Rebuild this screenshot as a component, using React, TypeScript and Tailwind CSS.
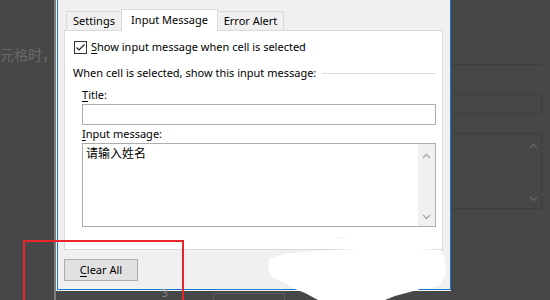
import React from 'react';

const font = { fontFamily: '"Noto Sans", "Noto Sans CJK SC", sans-serif' };

function Chevron({ up }: { up?: boolean }) {
  return (
    <svg width="9" height="6" viewBox="0 0 9 6" className="block">
      <path
        d={up ? 'M1 5 L4.5 1.5 L8 5' : 'M1 1 L4.5 4.5 L8 1'}
        fill="none"
        stroke="#a6a6a6"
        strokeWidth="1.3"
      />
    </svg>
  );
}

function Tab({ label, width, active }: { label: string; width: string; active?: boolean }) {
  if (active) {
    return (
      <div
        className={`relative z-10 -mb-px flex h-[22px] items-center justify-center border border-b-0 border-[#d9d9d9] bg-white text-[11px] text-black ${width}`}
      >
        {label}
      </div>
    );
  }
  return (
    <div
      className={`mt-[2px] flex h-[19px] items-center justify-center border border-b-0 border-[#d9d9d9] bg-[#f0f0f0] text-[11px] text-black ${width}`}
    >
      {label}
    </div>
  );
}

export default function App() {
  return (
    <div className="relative flex h-[300px] w-[550px] overflow-hidden bg-[#474747]" style={font}>
      {/* sheet behind, left */}
      <div className="w-[54px] shrink-0 pt-[46px]">
        <div className="whitespace-nowrap text-[14px] leading-[18px] text-[#6a6a6a]">元格时，</div>
      </div>
      <div className="w-[2px] shrink-0 bg-[#7d7d7d]" />

      {/* dialog */}
      <div className="flex h-[291px] w-[395px] shrink-0 flex-col bg-[#f4f4f4] pb-[1px] pl-px">
        <div className="flex h-[290px] flex-col border-x border-b border-[#1c79d2] bg-[#f0f0f0] pl-[6px]">
          {/* tabs */}
          <div className="mt-[9px] flex pl-[2px]">
            <Tab label="Settings" width="w-[56px]" />
            <Tab label="Input Message" width="w-[97px] -ml-px" active />
            <Tab label="Error Alert" width="w-[67px] -ml-px" />
          </div>

          {/* panel */}
          <div className="h-[220px] w-[379px] border border-[#d9d9d9] bg-white pl-[9px] pr-[6px]">
            <div className="mt-[9px] flex h-[15px] items-center gap-[4px] text-[11px] text-black">
              <div className="flex h-[13px] w-[13px] items-center justify-center border border-[#333333] bg-white">
                <svg width="11" height="11" viewBox="0 0 11 11">
                  <path d="M1.5 5.5 L4 8 L9.5 2.5" fill="none" stroke="#222" strokeWidth="1.2" />
                </svg>
              </div>
              <span>
                <u className="underline-offset-2">S</u>how input message when cell is selected
              </span>
            </div>

            <div className="mt-[10px] flex h-[16px] items-center gap-[6px] text-[11px] text-black">
              <span className="-ml-px whitespace-nowrap">When cell is selected, show this input message:</span>
              <div className="h-px flex-1 bg-[#dcdcdc]" />
            </div>

            <div className="pl-[8px]">
              <div className="mt-[6px] flex h-[16px] items-center text-[11px] text-black">
                <span>
                  <u className="underline-offset-2">T</u>itle:
                </span>
              </div>
              <div className="mt-px h-[21px] border border-[#acacac] bg-white" />

              <div className="mt-[1px] flex h-[16px] items-center text-[11px] text-black">
                <span>
                  <u className="underline-offset-2">I</u>nput message:
                </span>
              </div>
              <div className="mt-px flex h-[84px] border border-[#acacac] bg-white">
                <div className="flex-1 pl-[3px] pt-[2px] text-[12px] leading-[16px] text-black">请输入姓名</div>
                <div className="flex w-[17px] flex-col items-center justify-between bg-[#f0f0f0] pb-[6px] pt-[9px]">
                  <Chevron up />
                  <Chevron />
                </div>
              </div>
            </div>
          </div>

          {/* footer */}
          <div className="mt-[9px]">
            <div className="flex h-[22px] w-[74px] items-center justify-center border border-[#adadad] bg-[#e1e1e1] text-[11px] text-black">
              <span>
                <u className="underline-offset-2">C</u>lear All
              </span>
            </div>
          </div>
        </div>
      </div>

      {/* sheet behind, right (darkened copy) */}
      <div className="w-[91px] shrink-0">
        <div className="mt-[64px] h-px bg-[#3e3e3e]" />
        <div className="mt-[29px] h-[20px] border-y border-r border-[#3e3e3e]" />
        <div className="mt-[19px] flex h-[76px] justify-end border-y border-r border-[#3e3e3e]">
          <div className="flex w-[16px] flex-col items-center justify-between bg-[#4a4a4a] pb-[6px] pt-[9px] opacity-30">
            <Chevron up />
            <Chevron />
          </div>
        </div>
      </div>

      {/* bits of the sheet under the dialog */}
      <div className="absolute left-[162px] top-[288px] text-[10px] leading-[11px] text-[#8a8a8a]">3</div>
      <div className="absolute left-[213px] top-[293px] h-[12px] w-[72px] border border-[#5c5c5c]" />

      {/* red annotation box */}
      <div className="absolute left-[23px] top-[240px] h-[70px] w-[161px] border-[2.5px] border-[#e8242c]" />

      {/* white redaction scribble */}
      <svg className="absolute left-0 top-0" width="550" height="300" viewBox="0 0 550 300">
        <polygon
          fill="#ffffff"
          points="270,258 285,254 300,252 330,250 360,249 395,248 420,249 440,250 445,258 446,275 440,285 432,288 420,289 410,292 395,296 385,300 318,300 305,293 295,289 285,283 272,277 268,268"
        />
        <rect x="372" y="235" width="13" height="2" fill="#ffffff" />
        <rect x="336" y="237" width="10" height="1.5" fill="#f4f4f4" />
      </svg>
    </div>
  );
}
